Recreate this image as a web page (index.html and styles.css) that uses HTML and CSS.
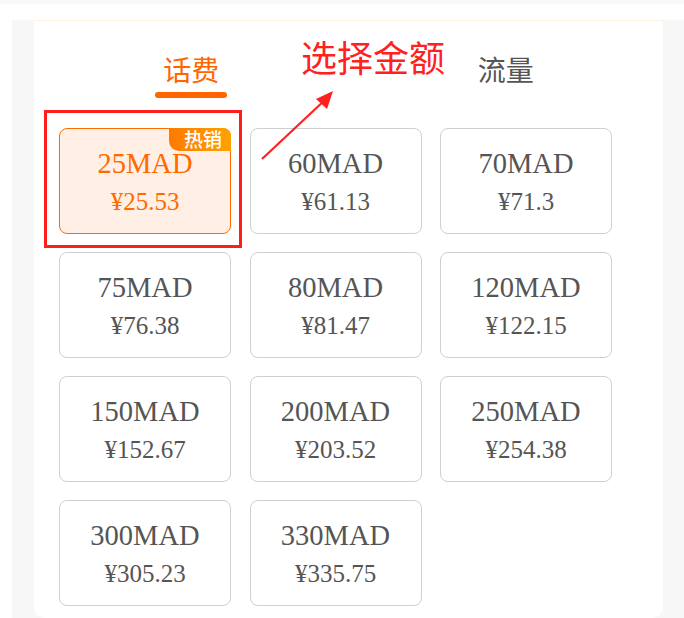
FILE: index.html
```html
<!DOCTYPE html>
<html lang="zh-CN">
<head>
    <meta charset="UTF-8">
    <meta name="viewport" content="width=device-width, initial-scale=1.0">
    <title>话费充值</title>
    <link rel="stylesheet" href="styles.css">
</head>
<body>
    <div class="topbar"></div>

    <div class="wrap">
        <div class="card">
            <div class="tabs">
                <div class="tab active">
                    <span>话费</span>
                    <div class="tab-line"></div>
                </div>
                <div class="tab"><span>流量</span></div>
            </div>

            <div class="grid">
                <div class="item selected">
                    <div class="badge">热销</div>
                    <div class="amount">25MAD</div>
                    <div class="price">¥25.53</div>
                </div>
                <div class="item">
                    <div class="amount">60MAD</div>
                    <div class="price">¥61.13</div>
                </div>
                <div class="item">
                    <div class="amount">70MAD</div>
                    <div class="price">¥71.3</div>
                </div>
                <div class="item">
                    <div class="amount">75MAD</div>
                    <div class="price">¥76.38</div>
                </div>
                <div class="item">
                    <div class="amount">80MAD</div>
                    <div class="price">¥81.47</div>
                </div>
                <div class="item">
                    <div class="amount">120MAD</div>
                    <div class="price">¥122.15</div>
                </div>
                <div class="item">
                    <div class="amount">150MAD</div>
                    <div class="price">¥152.67</div>
                </div>
                <div class="item">
                    <div class="amount">200MAD</div>
                    <div class="price">¥203.52</div>
                </div>
                <div class="item">
                    <div class="amount">250MAD</div>
                    <div class="price">¥254.38</div>
                </div>
                <div class="item">
                    <div class="amount">300MAD</div>
                    <div class="price">¥305.23</div>
                </div>
                <div class="item">
                    <div class="amount">330MAD</div>
                    <div class="price">¥335.75</div>
                </div>
            </div>

            <!-- annotation layer drawn over the screenshot -->
            <div class="note-box"></div>
            <svg class="note-arrow" width="80" height="76" viewBox="0 0 80 76">
                <line x1="2" y1="72" x2="66" y2="12" stroke="#ff2020" stroke-width="2.2"/>
                <polygon points="73,4 56,12 67,22" fill="#ff2020"/>
            </svg>
            <div class="note-text">选择金额</div>
        </div>
    </div>
</body>
</html>
```

FILE: styles.css
```css
body {
    margin: 0;
    background-color: #fff;
    font-family: "Noto Sans CJK SC", "Noto Sans", sans-serif;
    overflow: hidden;
}
.topbar {
    height: 4px;
    background-color: #f9f9f9;
}
.wrap {
    margin: 16px 0 0 12px;
    padding: 0 21px 0 22px;
    background-color: #f7f7f7;
}
.card {
    position: relative;
    background-color: #fff;
    border-top: 1px solid #fff0e2;
    border-radius: 0 0 10px 10px;
    height: 597px;
}
.tabs {
    display: flex;
    padding-top: 30px;
}
.tab {
    flex: 1;
    text-align: center;
    font-size: 28px;
    line-height: 36px;
    color: #555;
}
.tab.active {
    color: #ff6600;
}
.tab-line {
    width: 72px;
    height: 6px;
    border-radius: 3px;
    background-color: #ff6600;
    margin: 5px auto 0;
}
.grid {
    display: grid;
    grid-template-columns: repeat(3, 172px);
    grid-auto-rows: 106px;
    column-gap: 18.5px;
    row-gap: 18px;
    margin: 30px 0 0 25px;
}
.item {
    position: relative;
    box-sizing: border-box;
    padding-top: 4px;
    border: 1px solid #cfcfcf;
    border-radius: 8px;
    display: flex;
    flex-direction: column;
    align-items: center;
    justify-content: center;
    font-family: "Liberation Serif", "Times New Roman", serif;
    color: #555;
}
.item.selected {
    background-color: #ffefe4;
    border-color: #ff6a00;
    color: #ff6a00;
}
.amount {
    font-size: 28.5px;
    line-height: 38px;
}
.price {
    font-size: 25px;
    line-height: 38px;
}
.badge {
    position: absolute;
    top: -1px;
    right: -1px;
    padding: 0 9px 0 15px;
    height: 23px;
    line-height: 22px;
    font-family: "Noto Sans CJK SC", sans-serif;
    font-size: 19px;
    font-weight: 500;
    color: #fff;
    background: linear-gradient(90deg, #ff7a00, #ffa200);
    border-radius: 0 8px 0 10px;
}
.note-box {
    position: absolute;
    left: 10px;
    top: 89px;
    width: 192px;
    height: 132px;
    border: 3px solid #ff1e1e;
}
.note-arrow {
    position: absolute;
    left: 226px;
    top: 66px;
}
.note-text {
    position: absolute;
    left: 267px;
    top: 11px;
    font-size: 36px;
    line-height: 48px;
    color: #ff2020;
}
```
